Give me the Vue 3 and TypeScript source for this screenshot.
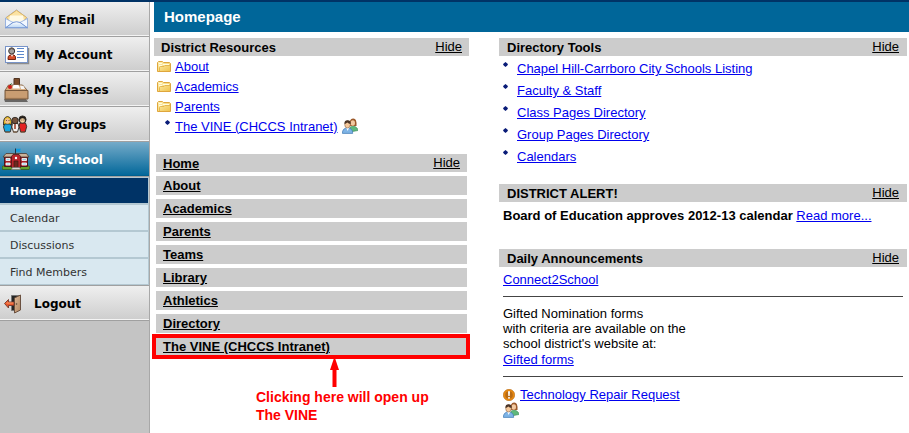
<script setup lang="ts">
interface NavItem { label: string; icon: string; active?: boolean }

const navTop: NavItem[] = [
  { label: 'My Email', icon: 'mail' },
  { label: 'My Account', icon: 'card' },
  { label: 'My Classes', icon: 'desk' },
  { label: 'My Groups', icon: 'group' },
  { label: 'My School', icon: 'school', active: true },
]
const subNav: string[] = ['Homepage', 'Calendar', 'Discussions', 'Find Members']
const folders: string[] = ['About', 'Academics', 'Parents']
const sections: string[] = ['About', 'Academics', 'Parents', 'Teams', 'Library', 'Athletics', 'Directory']
const tools: string[] = [
  'Chapel Hill-Carrboro City Schools Listing',
  'Faculty & Staff',
  'Class Pages Directory',
  'Group Pages Directory',
  'Calendars',
]
</script>

<template>
  <div class="page">
    <svg class="defs" aria-hidden="true">
      <defs>
        <linearGradient id="gold" x1="0" y1="0" x2="1" y2="1">
          <stop offset="0" stop-color="#fff3b8" /><stop offset="1" stop-color="#efc24a" />
        </linearGradient>
        <linearGradient id="sky" x1="0" y1="0" x2="0" y2="1">
          <stop offset="0" stop-color="#ffffff" /><stop offset="1" stop-color="#b9d6f5" />
        </linearGradient>
        <linearGradient id="wood" x1="0" y1="0" x2="1" y2="1">
          <stop offset="0" stop-color="#dcb998" /><stop offset="1" stop-color="#b08560" />
        </linearGradient>
        <symbol id="people" viewBox="0 0 16 16">
          <path d="M8 14V9.500Q9 8 11 8t4 2q1 1 1 2.500z" fill="#5eb87c" stroke="#3d8a58" stroke-width=".6" />
          <path d="M7.500 8Q7 1 11 .6T14.500 8z" fill="#9c5a2b" />
          <ellipse cx="10.800" cy="5" rx="2.200" ry="2.800" fill="#f3c9a0" />
          <path d="M.4 15.400Q.3 10 5.500 10t5.200 5.400z" fill="#7eb4e6" stroke="#3f78b4" stroke-width=".7" />
          <path d="M4.300 10l1.400 3L7 10z" fill="#fff" />
          <ellipse cx="5.500" cy="6.500" rx="2.800" ry="3.500" fill="#f5c89b" stroke="#7a5235" stroke-width=".5" />
          <path d="M2.500 6Q2 2.500 5.500 2.300T8.600 6Q6.500 5.500 5.300 4.500 4 5.600 2.500 6" fill="#4b3425" />
        </symbol>
        <symbol id="dot" viewBox="0 0 5 5">
          <path d="M2.500 0L4 1.200 5 2.500 4 3.800 2.500 5 1 3.800 0 2.500 1 1.200z" fill="#0a1c78" />
        </symbol>
      </defs>
    </svg>

    <div class="topline"></div>
    <div class="shell">
      <nav class="sidebar" aria-label="Main">
        <a v-for="n in navTop" :key="n.label" href="#" class="nav" :class="{ active: n.active }">
          <svg v-if="n.icon === 'mail'" class="icon" viewBox="0 0 28 24">
            <path d="M3.500 10L14.500 2l10.500 8v9.500h-21.500z" fill="#e6f0fc" stroke="#7f9bd0" stroke-width=".8" />
            <path d="M4.500 9.500L14.500 2.300 24.500 9.500l-2 3h-16z" fill="#fbe3a4" stroke="#e0b052" stroke-width=".9" />
            <path d="M8 7.500h13l1 6H7z" fill="#fffae6" />
            <path d="M3.500 10.500l7.500 4-7.500 5.500zM25.500 10.500l-7.500 4 7.500 5.500z" fill="#f2f8ff" stroke="#8ea9dc" stroke-width=".8" />
            <path d="M3.500 19.800l7.500-5.300q3.500-1.500 7 0l7.500 5.300z" fill="url(#sky)" stroke="#6b8fd0" stroke-width=".9" />
          </svg>
          <svg v-else-if="n.icon === 'card'" class="icon" viewBox="0 0 28 24">
            <path d="M5 20.500h21.500V5" fill="none" stroke="#8c8c8c" stroke-width="1.500" />
            <rect x="3.500" y="3.500" width="22" height="16" fill="#fff" stroke="#7894c8" />
            <path d="M15 5.500h7M15 8.500h7M15 11.500h7M15 14.500h7" stroke="#5c88cc" />
            <path d="M6 16.500q-.5-4 2-4.500h4q2 .5 1.500 4.500z" fill="#d84f2c" stroke="#732413" />
            <circle cx="9.700" cy="8" r="3" fill="#a3a09e" stroke="#3e3735" />
            <path d="M7 7.500Q7 4.500 9.700 4.500 12.500 4.700 12.500 7.500l-2.800-1.500z" fill="#635852" /><path d="M9 12l1 2 1-2z" fill="#fff" />
          </svg>
          <svg v-else-if="n.icon === 'desk'" class="icon" viewBox="0 0 28 24">
            <path d="M2 21h22l2 3H3z" fill="#4e4b48" opacity=".8" />
            <path d="M12 .500h5.500v7h-5.500z" fill="#7b4b28" stroke="#503522" />
            <path d="M6.500 7h14l5 5.500H3z" fill="#d7ad80" stroke="#86694e" />
            <path d="M3 12.500h23V21H3z" fill="#bd9269" stroke="#77583c" />
            <path d="M10.500 10.500l1-3.500h5l1.500 3.500z" fill="#fff" /><path d="M18 7.500l3.500.5 1.500 3h-4z" fill="#f5f5f5" />
            <path d="M4 13h21v6.500H4z" fill="#c99d72" />
            <circle cx="8" cy="9" r="2" fill="#cf1d18" /><path d="M8 7l1.500-1.500" stroke="#286a27" />
          </svg>
          <svg v-else-if="n.icon === 'group'" class="icon" viewBox="0 0 28 24">
            <g stroke="#302a25" stroke-width=".9">
              <path d="M1.500 12Q1 4 5.500 3.500 10 4 9.500 12z" fill="#e7bd24" />
              <path d="M2.500 11h6l1.200 3-1.500 5H3l-1.500-5z" fill="#19a5df" />
              <path d="M10.500 10.500h5.500l1 3.500-1.500 5h-4L9.800 14z" fill="#f3f2ef" />
              <circle cx="13" cy="7.500" r="3.200" fill="#74513b" />
              <path d="M17.800 10h5.700l1.200 3.500-1.500 5.500h-4.500l-1.500-5.500z" fill="#e42222" />
              <circle cx="20.500" cy="6.500" r="3.600" fill="#211c1a" />
            </g>
            <ellipse cx="5.500" cy="8" rx="2.300" ry="2.700" fill="#f1c194" />
            <ellipse cx="20.500" cy="7.500" rx="2.500" ry="2.300" fill="#f4d5a3" />
            <path d="M13 11v5" stroke="#9d432f" stroke-width="1.600" />
            <path d="M3.500 19h4M11 19h4M18.500 19h4" stroke="#785436" />
            <path d="M4 7.500h1m1.500 0h1M19.300 7h1m1 0h1" stroke="#54392e" stroke-width=".8" />
          </svg>
          <svg v-else class="icon school" viewBox="0 0 28 24">
            <path d="M0 18.500l4-1.500h21l3 2-1 2.500H.5z" fill="#61a22d" stroke="#315d22" stroke-width=".8" />
            <path d="M2.500 9v9.500h23V9z" fill="#a51f25" stroke="#4b171a" />
            <path d="M1 9l3-3.500h20.500L27 9z" fill="#cbb39b" stroke="#493a31" stroke-width=".8" />
            <path d="M9.500 19.500V8.500l1.500-2h6l1.500 2v11z" fill="#b9262c" stroke="#4b171a" stroke-width=".8" />
            <path d="M12 13h4v6.500h-4z" fill="#6b2a20" stroke="#3b1612" stroke-width=".6" />
            <path d="M10.500 19.500h7l1 2h-9z" fill="#d8d8d8" stroke="#777" stroke-width=".5" />
            <path d="M4 10.500h4v2H4zM4 15h4v2H4zM20 10.500h4.500v2H20zM20 15h4.500v2H20z" fill="#9bd3e6" stroke="#fff" stroke-width=".8" />
            <circle cx="14" cy="10" r="1.200" fill="#fff" />
            <path d="M13.500 6V.500" stroke="#234" /><path d="M14 .7h5l-1 1.500 1 1.500h-5z" fill="#139bdc" />
          </svg>
          <span>{{ n.label }}</span>
        </a>
        <div class="subnav">
          <a v-for="(s, i) in subNav" :key="s" href="#" :class="{ current: i === 0 }">{{ s }}</a>
        </div>
        <a href="#" class="nav">
          <svg class="icon" viewBox="0 0 28 24">
            <path d="M9.500 3.500h8v15h-8z" fill="#262626" stroke="#777" />
            <path d="M12.500 6l6-3v15l-6 3z" fill="url(#wood)" stroke="#6b5140" />
            <circle cx="14.500" cy="12" r=".8" fill="#574031" />
            <path d="M2.500 11.500L6.500 7.500V10H12v3.500H6.500V16z" fill="#e8582c" stroke="#75392b" stroke-width=".9" />
            <path d="M4.500 11h7" stroke="#ff9a68" />
          </svg>
          <span>Logout</span>
        </a>
      </nav>

      <main class="main">
        <h1>Homepage</h1>
        <div class="columns">
          <div class="left">
            <section>
              <div class="bar"><h2>District Resources</h2><a href="#">Hide</a></div>
              <ul class="resources">
                <li v-for="f in folders" :key="f">
                  <svg class="folder" viewBox="0 0 14 11">
                    <path d="M.5 10.500v-9l1-1h4l1 1h6l1 1v8z" fill="url(#gold)" stroke="#dfa63c" />
                    <path d="M2 2.500h3M2 4.500h3l1-1h6" stroke="#fffbe0" fill="none" />
                    <path d="M2.500 10V6.500l1-1H7L8 4.500h5" stroke="#e4b850" fill="none" />
                  </svg>
                  <a href="#">{{ f }}</a>
                </li>
                <li>
                  <svg class="dot"><use href="#dot" /></svg>
                  <a href="#">The VINE (CHCCS Intranet)</a>
                  <svg class="people"><use href="#people" /></svg>
                </li>
              </ul>
            </section>
            <section class="site">
              <div class="bar"><h2><a href="#">Home</a></h2><a href="#">Hide</a></div>
              <a v-for="s in sections" :key="s" href="#" class="row">{{ s }}</a>
              <a href="#" class="row marked">The VINE (CHCCS Intranet)</a>
              <div class="callout">
                <svg class="arrow" viewBox="0 0 9 30"><path d="M4 0h1L9 12H6.500V29h-4V12H0z" fill="#f00" /></svg>
                <p>Clicking here will open up<br />The VINE</p>
              </div>
            </section>
          </div>

          <div class="right">
            <section>
              <div class="bar"><h2>Directory Tools</h2><a href="#">Hide</a></div>
              <ul class="tools">
                <li v-for="t in tools" :key="t">
                  <svg class="dot"><use href="#dot" /></svg>
                  <a href="#">{{ t }}</a>
                </li>
              </ul>
            </section>
            <section class="alert">
              <div class="bar"><h2>DISTRICT ALERT!</h2><a href="#">Hide</a></div>
              <p><strong>Board of Education approves 2012-13 calendar</strong> <a href="#">Read more...</a></p>
            </section>
            <section>
              <div class="bar"><h2>Daily Announcements</h2><a href="#">Hide</a></div>
              <div class="news">
                <a href="#">Connect2School</a>
                <hr />
                <p>Gifted Nomination forms<br />with criteria are available on the<br />school district's website at:</p>
                <a href="#">Gifted forms</a>
                <hr />
                <div class="repair">
                  <svg class="warn" viewBox="0 0 12 12">
                    <circle cx="6" cy="6" r="5.700" fill="#e88a10" stroke="#b86a10" stroke-width=".6" />
                    <circle cx="6" cy="6" r="3.800" fill="#b96b14" />
                    <path d="M5 2.200h2L6.700 7H5.300zM5.200 8h1.600v1.700H5.200z" fill="#fff" />
                  </svg>
                  <a href="#">Technology Repair Request</a>
                </div>
                <svg class="people"><use href="#people" /></svg>
              </div>
            </section>
          </div>
        </div>
      </main>
    </div>
  </div>
</template>

<style>
body { margin: 0; background: #fff; }
</style>

<style scoped>
.page {
  min-height: 100vh;
  display: flex;
  flex-direction: column;
  font: 13px/15px "Liberation Sans", Arial, sans-serif;
  color: #000;
}
.defs { position: absolute; width: 0; height: 0; }
.topline { height: 2px; background: #003366; }
.shell { flex: 1; display: flex; }
.sidebar {
  box-sizing: border-box;
  width: 150px;
  flex: none;
  background: #c4c4c4;
  border-right: 1px solid #a8a8a8;
  font-family: "DejaVu Sans", Verdana, sans-serif;
}
.nav {
  box-sizing: border-box;
  height: 35px;
  display: flex;
  align-items: center;
  gap: 4px;
  padding: 2px 0 0 2px;
  background: linear-gradient(#efefef, #cdcdcd);
  border-bottom: 1px solid #a0a0a0;
  box-shadow: inset 0 -1px #f4f4f4;
  color: #000;
  font-size: 12px;
  font-weight: bold;
  text-decoration: none;
}
.nav.active {
  background: linear-gradient(#75abc9, #006699);
  box-shadow: inset 0 -1px #00608f;
  color: #fff;
}
.icon { width: 28px; height: 24px; flex: none; }
.subnav {
  display: flex;
  flex-direction: column;
  gap: 2px;
  padding: 1px 1px 1px 0;
  background: #b4c8d2;
  border-bottom: 1px solid #a0a0a0;
}
.subnav a {
  height: 25px;
  padding-left: 10px;
  background: #d9e8f0;
  color: #333;
  font-size: 11px;
  line-height: 27px;
  text-decoration: none;
}
.subnav .current { background: #003366; color: #fff; font-weight: bold; }
.main { flex: 1; min-width: 0; padding-left: 4px; }
h1 {
  margin: 0;
  padding-left: 10px;
  background: #006699;
  color: #fff;
  font-size: 15px;
  line-height: 30px;
}
.columns {
  display: grid;
  grid-template-columns: 315fr 408fr;
  gap: 30px;
  padding: 6px 2px 0 0;
}
.main a { color: #00e; }
.bar {
  display: flex;
  justify-content: space-between;
  height: 18px;
  padding: 0 7px;
  background: #ccc;
  line-height: 18px;
}
.main .bar a, .main .row { color: #000; }
h2 { margin: 0; font-size: 13px; line-height: 19px; }
ul { list-style: none; margin: 0; padding: 0; }
p { margin: 0; }
.resources { padding-left: 3px; }
.resources li { display: flex; align-items: center; gap: 4px; height: 20px; }
.resources .dot { margin: 0 1px 8px 8px; }
.folder { width: 14px; height: 11px; }
.dot { width: 5px; height: 5px; flex: none; }
.people { display: block; width: 16px; height: 16px; }
.site { margin: 18px 2px 0; }
.row {
  display: block;
  height: 19px;
  margin-top: 4px;
  padding-left: 7px;
  background: #ccc;
  font-weight: bold;
  line-height: 19px;
}
.marked { position: relative; }
.marked::after {
  content: "";
  position: absolute;
  inset: -3px -3px -3px -4px;
  border: 4px solid #f00;
}
.callout { padding: 2px 0 0 100px; color: #f00; font-size: 14px; font-weight: bold; line-height: 18px; }
.arrow { display: block; width: 9px; height: 30px; margin-left: 74px; }
.right .bar { padding: 0 8px; }
.tools { padding: 2px 0 16px 4px; }
.tools li { display: flex; gap: 9px; height: 22px; line-height: 21px; }
.tools .dot { margin-top: 4px; }
.alert p { padding: 6px 4px 26px; }
.news { padding: 5px 4px 0; }
hr { margin: 9px 0; border: 0; border-top: 1px solid #444; }
.news p { padding-bottom: 1px; }
.repair { display: flex; align-items: center; gap: 5px; padding-top: 1px; }
.warn { width: 12px; height: 12px; }
</style>
